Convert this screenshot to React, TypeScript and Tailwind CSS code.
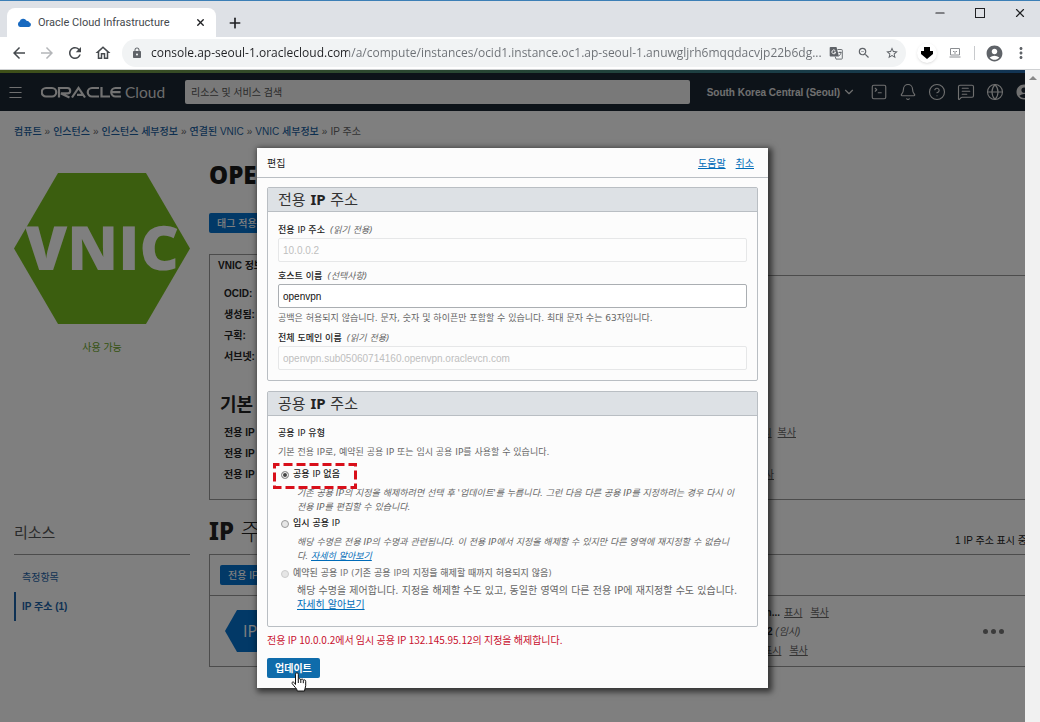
import React from "react";
import { Minus, X, Plus, Bell, Globe, Menu, SquareTerminal, MessageSquareText, CircleHelp, ChevronDown } from "lucide-react";
import { MdLock, MdArrowBack, MdArrowForward, MdRefresh, MdOutlineHome, MdAccountCircle, MdMoreVert, MdZoomOut, MdStarBorder } from "react-icons/md";

const link = "text-[#006bb8] underline";

function BrowserChrome() {
  return (
    <header className="shrink-0 border-t border-[#3c7fb6] bg-[#dee1e6] font-['Open_Sans','Noto_Sans_CJK_KR',sans-serif]">
      <div className="flex h-9 items-start">
        <div className="mt-[7px] ml-[7px] flex h-[29px] w-[209px] items-center rounded-t-lg bg-white pr-2.5 pl-2.5">
          <svg viewBox="0 0 14 9" className="h-[9px] w-[14px]" aria-hidden="true">
            <path d="M3 9a3 3 0 0 1-.4-5.5A3.8 3.8 0 0 1 9.500 2.700 3 3 0 0 1 12.500 4.600 2.300 2.300 0 0 1 12 9z" fill="#1769c0" />
          </svg>
          <span className="ml-[7px] flex-1 font-['Roboto',sans-serif] text-[11px] leading-4 whitespace-nowrap text-[#45494d]">Oracle Cloud Infrastructure</span>
          <button aria-label="Close tab" className="text-[#202124]"><X size={11} strokeWidth={3} /></button>
        </div>
        <button aria-label="New tab" className="mt-[14px] ml-[11px] text-[#202124]"><Plus size={16} strokeWidth={2.5} /></button>
        <div className="mr-[13px] ml-auto flex gap-[26px] pt-[5px] text-[#202124]">
          <button aria-label="Minimize"><Minus size={14} strokeWidth={2} /></button>
          <button aria-label="Maximize"><svg viewBox="0 0 14 14" className="size-3.5"><rect x="2.500" y="2.500" width="9" height="9" fill="none" stroke="#202124" /></svg></button>
          <button aria-label="Close"><X size={14} strokeWidth={2} /></button>
        </div>
      </div>
      <div className="flex h-[33px] items-center border-b border-[#cfd1d3] bg-white pl-2.5 text-[#5f6368]">
        <button aria-label="Back" className="w-7 text-[#45494d]"><MdArrowBack size={18} /></button>
        <button aria-label="Forward" className="w-7 text-[#b4b6b9]"><MdArrowForward size={18} /></button>
        <button aria-label="Reload" className="w-7 text-[#45494d]"><MdRefresh size={18} /></button>
        <button aria-label="Home" className="w-7 text-[#45494d]"><MdOutlineHome size={18} /></button>
        <div className="flex h-7 min-w-0 flex-1 items-center rounded-full bg-[#f1f3f4] pr-[7px] pl-[9px]">
          <MdLock size={12} className="shrink-0" />
          <input
            aria-label="Address"
            readOnly
            className="ml-2 min-w-0 flex-1 bg-linear-to-r from-[#202124] from-[197px] to-[#6b6f74] to-[197px] bg-clip-text text-[12px] text-transparent outline-none"
            value="console.ap-seoul-1.oraclecloud.com/a/compute/instances/ocid1.instance.oc1.ap-seoul-1.anuwgljrh6mqqdacvjp22b6dg..."
          />
          <div className="flex items-center gap-[14px]">
            <button aria-label="Translate">
              <svg viewBox="0 0 14 14" className="size-3.5">
                <path d="M1.500 1h6l2.500 9.500H1.500a.8.8 0 0 1-.8-.8V1.800A.8.8 0 0 1 1.500 1z" fill="#5f6368" />
                <path d="M8.500 3.500h4a.8.8 0 0 1 .8.8v8a.8.8 0 0 1-.8.8H7l-.8-2.500M9.500 6.500h3M11 5.500v1M12 6.500c-.3 1.800-1.200 2.800-2 3.500" fill="none" stroke="#5f6368" strokeWidth=".9" />
                <path d="M6.300 4.700a1.900 1.900 0 1 0 .4 1.500H5" fill="none" stroke="#fff" strokeWidth=".9" />
              </svg>
            </button>
            <button aria-label="Zoom"><MdZoomOut size={14} /></button>
            <button aria-label="Bookmark"><MdStarBorder size={14} /></button>
          </div>
        </div>
        <div className="flex items-center">
          <button aria-label="Download" className="ml-[11px] grid size-5 place-items-center rounded-full bg-white shadow"><svg viewBox="0 0 12 12" className="size-3"><path d="M3 0h6v4h3v3L6 12 0 7V4h3z" /></svg></button>
          <button aria-label="Extension" className="ml-3">
            <svg viewBox="0 0 12 10" className="h-2.5 w-3"><path d="M1.500.5h9v6.500h-9zM.5 9h11" fill="none" stroke="#8a8d91" /><path d="M4 3.500h1.500M6.500 3.500H8M5 5h2" stroke="#8a8d91" /></svg>
          </button>
          <span className="mr-2.5 ml-[13px] h-3.5 w-px bg-[#c8cacd]" />
          <button aria-label="Profile"><MdAccountCircle size={19} /></button>
          <button aria-label="More" className="ml-2 mr-2.5"><MdMoreVert size={18} /></button>
        </div>
      </div>
    </header>
  );
}

function ConsoleHeader() {
  return (
    <div className="shrink-0">
      <div className="h-[3px] bg-linear-to-r from-[#7fa030] via-[#4b8a6a] to-[#2468a8]" />
      <div className="flex h-[38px] items-center overflow-hidden bg-[#1a2733] pl-[7px] text-[#e0e0e0]">
        <button aria-label="Menu"><Menu size={17} strokeWidth={1.500} /></button>
        <div className="ml-[17px] flex w-[144px] shrink-0 items-center">
          <svg viewBox="0 0 124 14" className="h-3.5 w-[124px]" role="img" aria-label="ORACLE Cloud">
            <g fill="none" stroke="#e4e4e4" strokeWidth="2.200">
              <path d="M5 3h6a4 4 0 0 1 0 8.500H5A4 4 0 0 1 5 3z" />
              <path d="M18 12.500V3h8.500a2.700 2.700 0 0 1 0 5.400H20l8.500 4" />
              <path d="M31 12.500l6.500-9.500 6.500 9.500M36 9.800h6" />
              <path d="M58 3h-7a4 4 0 0 0 0 8.500h7" />
              <path d="M60.500 2v9.500H69" />
              <path d="M80 3h-5.500a4 4 0 0 0 0 8.500H80M71 7.200h8.500" />
            </g>
            <text x="84" y="12.500" fontSize="15.500" fontFamily="Lato, sans-serif" fill="#d8d8d8">Cloud</text>
          </svg>
        </div>
        <input aria-label="리소스 및 서비스 검색" placeholder="리소스 및 서비스 검색" className="h-6 min-w-0 flex-1 rounded-xs bg-[#f2f2f2] px-1.5 text-[10px] placeholder:text-[#555]" />
        <button className="ml-[17px] flex items-center gap-0.5 text-[10px] font-bold whitespace-nowrap">South Korea Central (Seoul) <ChevronDown size={14} /></button>
        <div className="mr-[-8px] ml-3.5 flex shrink-0 items-center gap-[11px]">
          <button aria-label="Cloud Shell"><SquareTerminal size={18} strokeWidth={1.500} /></button>
          <button aria-label="Notifications"><Bell size={18} strokeWidth={1.500} /></button>
          <button aria-label="Help"><CircleHelp size={18} strokeWidth={1.500} /></button>
          <button aria-label="Chat"><MessageSquareText size={18} strokeWidth={1.500} /></button>
          <button aria-label="Language"><Globe size={18} strokeWidth={1.500} /></button>
          <button aria-label="Account"><MdAccountCircle size={18} /></button>
        </div>
      </div>
    </div>
  );
}

function Breadcrumbs() {
  const crumbs = ["컴퓨트", "인스턴스", "인스턴스 세부정보", "연결된 VNIC", "VNIC 세부정보"];
  return (
    <nav className="mb-0.5 flex h-10 items-center gap-[3px] whitespace-nowrap text-[#666]">
      {crumbs.map((c) => (
        <React.Fragment key={c}>
          <a href="#" className="font-medium text-[#1b5fa0]">{c}</a>
          <span>»</span>
        </React.Fragment>
      ))}
      <span>IP 주소</span>
    </nav>
  );
}

function Sidebar() {
  return (
    <aside className="w-[176px] shrink-0">
      <svg viewBox="0 0 176 151" className="mt-5 h-[151px] w-[176px]" role="img" aria-label="VNIC">
        <path d="M44 0h88l44 75.500-44 75.500H44L0 75.500z" fill="#77bc1f" />
        <text x="88" y="97" textAnchor="middle" fontSize="61" fontWeight="800" fontFamily="Open Sans, sans-serif" fill="#fff" textRendering="geometricPrecision">VNIC</text>
      </svg>
      <p className="mt-4 text-center leading-4 text-[#68a51c]">사용 가능</p>
      <h2 className="mt-[166px] border-b border-[#999] pb-2.5 text-[15px] leading-[22px] text-[#555]">리소스</h2>
      <ul className="mt-2 flex flex-col text-[#1d63a8]">
        <li className="flex h-[29px] items-center pl-2"><a href="#">측정항목</a></li>
        <li className="flex h-[29px] items-center border-l-2 border-[#1d63a8] pl-1.5 font-bold"><a href="#">IP 주소 (1)</a></li>
      </ul>
    </aside>
  );
}

function MainColumn() {
  return (
    <section className="min-w-0 flex-1 text-[#222]">
      <h1 className="mt-[6px] font-['Open_Sans',sans-serif] text-[24px] leading-8 font-extrabold text-[#1a1a1a]">OPENVPN</h1>
      <button className="mt-[22px] block h-5 rounded-xs bg-[#0572ce] px-2 font-medium text-white">태그 적용</button>
      <div className="mt-[21px] flex">
        <div className="h-[22px] w-20 border-t border-l border-[#999] pl-2 font-bold leading-[22px]">VNIC 정보</div>
        <div className="flex-1 border-b border-[#999]" />
      </div>
      <div className="h-[224px] border-b border-l border-[#999] pt-[7px] pl-3.5 font-bold leading-[21px]">
        <p>OCID:</p>
        <p>생성됨:</p>
        <p>구획:</p>
        <p>서브넷:</p>
        <h3 className="mt-6 -ml-1 text-[18px] leading-7">기본 VNIC</h3>
        <dl className="mt-[3px]">
          <div className="flex"><dt className="w-[100px]">전용 IP</dt><dd className="flex w-[472px] justify-end gap-1.5 font-normal text-[#666]"><a href="#" className="underline">표시</a><a href="#" className="underline">복사</a></dd></div>
          <div className="flex"><dt>전용 IP</dt></div>
          <div className="flex"><dt className="w-[100px]">전용 IP</dt><dd className="flex w-[450px] justify-end font-normal text-[#666]"><a href="#" className="underline">복사</a></dd></div>
        </dl>
      </div>
      <div className="flex h-[54px] items-end justify-between">
        <h2 className="pb-1.5 text-[24px] leading-8 font-light"><b className="font-['Noto_Sans',sans-serif] font-extrabold">IP</b> 주소</h2>
        <span className="-mr-0.5 pb-[5px] leading-4 whitespace-nowrap">1 IP 주소 표시 중</span>
      </div>
      <div className="border-y border-l border-[#999]">
        <div className="flex h-[41px] items-center border-b border-[#999] pl-2.5">
          <button className="h-5 rounded-xs bg-[#0572ce] px-2 font-medium text-white">전용 IP 지정</button>
        </div>
        <div className="flex h-[70px] items-center pl-[15px]">
          <svg viewBox="0 0 48 42" className="h-[42px] w-12 shrink-0" role="img" aria-label="IP">
            <path d="M12 0h24l12 21-12 21H12L0 21z" fill="#0572ce" />
            <text x="18" y="27" fontSize="16" fontFamily="Open Sans, sans-serif" fill="#fff">IP</text>
          </svg>
          <div className="flex flex-1 flex-col pl-[490px] leading-[19px] text-[#666]">
            <p className="flex gap-2"><b className="w-[17px] text-right text-[#333]">n...</b><a href="#" className="-ml-1 underline">표시</a><a href="#" className="underline">복사</a></p>
            <p className="pl-1"><b className="text-[#222]">2</b> <i>(임시)</i></p>
            <p className="flex gap-2"><a href="#" className="underline">표시</a><a href="#" className="underline">복사</a></p>
          </div>
          <button aria-label="작업" className="mr-[21px] flex gap-[3px]">
            <span className="size-[5px] rounded-full bg-[#777]" /><span className="size-[5px] rounded-full bg-[#777]" /><span className="size-[5px] rounded-full bg-[#777]" />
          </button>
        </div>
      </div>
    </section>
  );
}

function Panel({ tail, lead, children }: { tail: string; lead: string; children: React.ReactNode }) {
  return (
    <fieldset className="rounded-xs border border-[#b9bec3]">
      <h3 className="h-6 border-b border-[#b9bec3] bg-[#dde1e5] pl-2.5 text-[15px] leading-[22px] text-[#333]">{lead} <b className="font-['Noto_Sans',sans-serif] text-[#222]">IP</b> {tail}</h3>
      <div className="px-2.5 pb-2.5">{children}</div>
    </fieldset>
  );
}

function Field({ id, label, hint, value, readOnly }: { id: string; label: string; hint: string; value: string; readOnly?: boolean }) {
  return (
    <div>
      <label htmlFor={id} className="block pt-1.5 text-[9px] leading-4 font-medium text-[#222]">{label} <i className="ml-[2px] font-normal text-[#666]">({hint})</i></label>
      <input
        id={id}
        defaultValue={value}
        readOnly={readOnly}
        className={readOnly ? "block h-6 w-full rounded-xs border border-[#e6e7e8] bg-[#fdfdfd] px-1 font-['Liberation_Sans',sans-serif] text-[10px] text-[#bfbfbf]" : "block h-6 w-full rounded-xs border border-[#aaaeb2] bg-white px-1 font-['Liberation_Sans',sans-serif] text-[10px] text-[#111]"}
      />
    </div>
  );
}

function Radio({ id, checked, disabled, children }: { id: string; checked?: boolean; disabled?: boolean; children: React.ReactNode }) {
  return (
    <div className="flex h-5 items-center gap-1 pl-[3px]">
      <input
        type="radio"
        name="ip-type"
        id={id}
        defaultChecked={checked}
        disabled={disabled}
        className="size-2 shrink-0 appearance-none rounded-full border border-[#9a9a9a] bg-[#e6e6e6] checked:bg-[#444] checked:shadow-[inset_0_0_0_1px_#fff] disabled:border-[#ccc]"
      />
      <label htmlFor={id} className={disabled ? "text-[9px] font-medium whitespace-nowrap text-[#777]" : "text-[9px] font-medium whitespace-nowrap text-[#222]"}>{children}</label>
    </div>
  );
}

function EditDialog() {
  return (
    <div role="dialog" aria-label="편집" className="w-[511px] bg-[#fcfcfc] shadow-[2px_2px_6px_2px_rgba(0,0,0,0.6)]">
      <div className="flex h-[30px] items-center border-b border-[#b9bec3] px-2.5 pt-0.5">
        <h2 className="text-[#222]">편집</h2>
        <div className="mr-[4px] ml-auto flex gap-2.5"><a href="#" className={link}>도움말</a><a href="#" className={link}>취소</a></div>
      </div>
      <form className="flex flex-col gap-2.5 px-2.5 pt-[9px] pb-2.5 font-['DejaVu_Sans','Noto_Sans_CJK_KR',sans-serif]" onSubmit={(e) => e.preventDefault()}>
        <Panel lead="전용" tail="주소">
          <div className="pt-1">
            <Field id="ip" label="전용 IP 주소" hint="읽기 전용" value="10.0.0.2" readOnly />
            <Field id="host" label="호스트 이름" hint="선택사항" value="openvpn" />
            <p className="h-4 pt-0.5 text-[9px] leading-4 whitespace-nowrap text-[#666]">공백은 허용되지 않습니다. 문자, 숫자 및 하이픈만 포함할 수 있습니다. 최대 문자 수는 63자입니다.</p>
            <Field id="fqdn" label="전체 도메인 이름" hint="읽기 전용" value="openvpn.sub05060714160.openvpn.oraclevcn.com" readOnly />
          </div>
        </Panel>
        <Panel lead="공용" tail="주소">
          <p className="pt-2 text-[9px] leading-[19px] font-medium text-[#222]">공용 IP 유형</p>
          <p className="text-[9px] leading-[19px] text-[#666]">기본 전용 IP로, 예약된 공용 IP 또는 임시 공용 IP를 사용할 수 있습니다.</p>
          <div className="relative mt-[3px]">
            <Radio id="none" checked>공용 IP 없음</Radio>
            <svg className="pointer-events-none absolute -top-0.5 -left-[5px] h-[26px] w-[84px]" aria-hidden="true"><path d="M1.500 1.500h81v23h-81z" fill="none" stroke="#d80f1a" strokeWidth="3" strokeDasharray="9 4" strokeDashoffset="4" /></svg>
          </div>
          <p className="pt-px pl-[19px] text-[9px] leading-3.5 whitespace-nowrap text-[#666] italic">기존 공용 IP의 지정을 해제하려면 선택 후 '업데이트'를 누릅니다. 그런 다음 다른 공용 IP를 지정하려는 경우 다시 이<br />전용 IP를 편집할 수 있습니다.</p>
          <Radio id="temp">임시 공용 IP</Radio>
          <p className="pt-px pl-[19px] text-[9px] leading-3.5 whitespace-nowrap text-[#666] italic">해당 수명은 전용 IP의 수명과 관련됩니다. 이 전용 IP에서 지정을 해제할 수 있지만 다른 영역에 재지정할 수 없습니<br />다. <a href="#" className={link}>자세히 알아보기</a></p>
          <div className="mt-px"><Radio id="reserved" disabled>예약된 공용 IP (기존 공용 IP의 지정을 해제할 때까지 허용되지 않음)</Radio></div>
          <p className="pb-1 pl-[19px] text-[10px] leading-3.5 whitespace-nowrap text-[#666]">해당 수명을 제어합니다. 지정을 해제할 수도 있고, 동일한 영역의 다른 전용 IP에 재지정할 수도 있습니다.<br /><a href="#" className={link}>자세히 알아보기</a></p>
        </Panel>
        <p className="-mt-[5px] font-['Noto_Sans_CJK_KR',sans-serif] leading-4 text-[#c8102e]">전용 IP 10.0.0.2에서 임시 공용 IP 132.145.95.12의 지정을 해제합니다.</p>
        <div className="relative w-fit">
          <button className="block h-5 rounded-xs bg-[#0f6cab] px-2 font-bold text-white">업데이트</button>
          <svg viewBox="0 0 16 21" className="pointer-events-none absolute top-3.5 left-6 h-[21px] w-4" aria-hidden="true">
            <path d="M4.500 12.500V2.200a1.400 1.400 0 0 1 2.800 0V7.500a1.300 1.300 0 0 1 2.500.4 1.300 1.300 0 0 1 2.500.6 1.300 1.300 0 0 1 2.400.8v4.500c0 2-1.200 3-1.200 5.200H6.300C6 16.500 3.500 15 1.200 11.600c-.8-1.300.8-2.200 1.900-1.100z" fill="#fff" stroke="#111" />
            <path d="M7.300 7.500v3.500M9.800 8v3M12.300 8.700v2.500" stroke="#111" fill="none" />
          </svg>
        </div>
      </form>
    </div>
  );
}

export default function App() {
  return (
    <div className="flex h-screen flex-col overflow-hidden font-['Liberation_Sans','Noto_Sans_CJK_KR',sans-serif] text-[10px]">
      <BrowserChrome />
      <div className="flex min-h-0 flex-1">
        <main className="relative min-w-0 flex-1 overflow-hidden bg-white">
          <ConsoleHeader />
          <div className="pl-3.5">
            <Breadcrumbs />
            <div className="flex gap-[19px]">
              <Sidebar />
              <MainColumn />
            </div>
          </div>
          <div className="absolute inset-0 flex items-start justify-center bg-black/50 pt-[78px]">
            <EditDialog />
          </div>
        </main>
        <div className="flex w-[15px] shrink-0 justify-center bg-[#f1f1f1] pt-1.5" aria-hidden="true">
          <svg viewBox="0 0 8 4" className="h-1 w-2"><path d="M0 4l4-4 4 4z" fill="#8a8a8a" /></svg>
        </div>
      </div>
    </div>
  );
}
